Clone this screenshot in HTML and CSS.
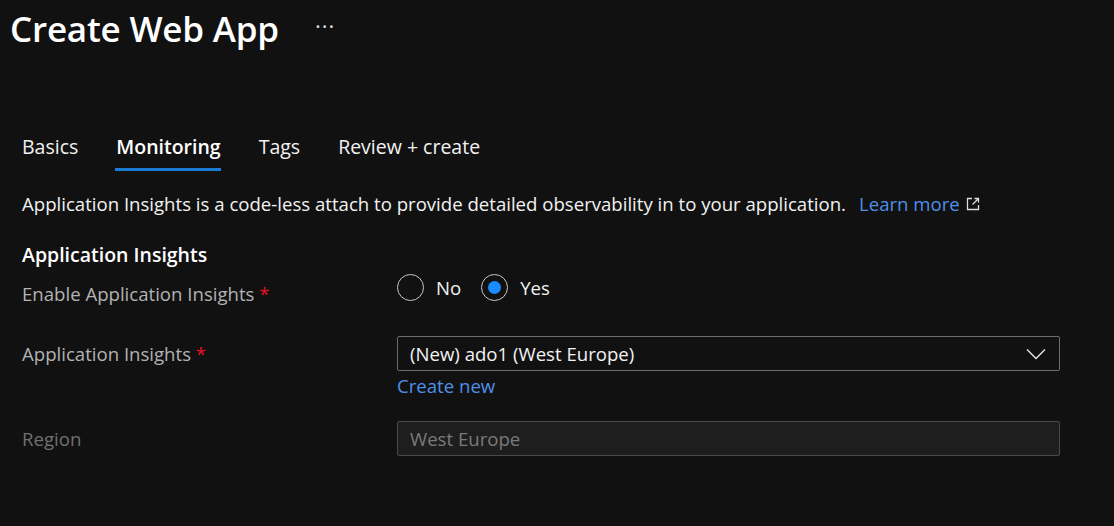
FILE: index.html
```html
<!DOCTYPE html>
<html>
<head>
<meta charset="utf-8">
<link rel="stylesheet" href="styles.css">
</head>
<body>
<div class="page">
  <header class="header">
    <h1 class="title">Create Web App</h1>
    <span class="more">···</span>
  </header>
  <nav class="tabs">
    <span class="tab">Basics</span>
    <span class="tab active">Monitoring</span>
    <span class="tab">Tags</span>
    <span class="tab">Review + create</span>
  </nav>
  <p class="desc">Application Insights is a code-less attach to provide detailed observability in to your application.<a class="link learn">Learn more<svg class="ext" width="16" height="16" viewBox="0 0 16 16"><path d="M7 2.5H2.5v11h11V9" fill="none" stroke="#ddd" stroke-width="1.3"/><path d="M9.5 2.5h4v4M13.5 2.5L7.5 8.5" fill="none" stroke="#ddd" stroke-width="1.3"/></svg></a></p>
  <h2 class="section">Application Insights</h2>
  <div class="row row-radio">
    <div class="label">Enable Application Insights <span class="req">*</span></div>
    <div class="radios">
      <label class="radio"><span class="circle"></span>No</label>
      <label class="radio"><span class="circle checked"></span>Yes</label>
    </div>
  </div>
  <div class="row row-select">
    <div class="label">Application Insights <span class="req">*</span></div>
    <div class="control">
      <div class="select">(New) ado1 (West Europe)<svg class="chev" width="20" height="12" viewBox="0 0 20 12"><path d="M1 1.5l9 9 9-9" fill="none" stroke="#e6e6e6" stroke-width="1.4"/></svg></div>
      <a class="link create">Create new</a>
    </div>
  </div>
  <div class="row row-region">
    <div class="label dim">Region</div>
    <div class="control">
      <div class="input disabled">West Europe</div>
    </div>
  </div>
</div>
</body>
</html>
```
FILE: styles.css
```css
* { box-sizing: border-box; }
html, body { margin: 0; padding: 0; background: #111111; }
body {
  font-family: "Open Sans", "Noto Sans", sans-serif;
  color: #f2f2f2;
  width: 1114px;
  height: 526px;
  overflow: hidden;
}
.page { padding: 0 0 0 22px; }
.header {
  display: flex;
  align-items: center;
  height: 56px;
  margin-left: -12px;
}
.title {
  margin: 0;
  font-size: 35px;
  font-weight: 600;
  letter-spacing: -0.2px;
  color: #ffffff;
}
.more {
  margin-left: 36px;
  font-size: 22px;
  color: #ddd;
  margin-top: -6px;
  letter-spacing: 1px;
}
.tabs {
  display: flex;
  gap: 38px;
  margin-top: 77px;
  height: 40px;
}
.tab {
  font-size: 19.5px;
  color: #f2f2f2;
  line-height: 28px;
  position: relative;
  height: 40px;
}
.tab.active { font-weight: 600; color: #fff; }
.tab.active::after {
  content: "";
  position: absolute;
  left: -1px; right: 0; bottom: 2px;
  height: 3px;
  background: #1a7ad4;
}
.desc {
  margin: 18px 0 0;
  font-size: 18.6px;
  line-height: 26px;
}
.link { color: #4f8fe8; }
.learn { margin-left: 13px; }
.ext { margin-left: 5px; vertical-align: -1px; }
.section {
  margin: 25px 0 0;
  font-size: 19.5px;
  font-weight: 600;
  line-height: 26px;
  color: #fff;
}
.row { display: flex; }
.label {
  width: 375px;
  font-size: 18.6px;
  color: #b3b3b3;
}
.label.dim { color: #707070; }
.req { color: #e81123; }
.row-radio { margin-top: 9px; height: 30px; align-items: center; }
.row-radio .label { padding-top: 2px; }
.radios { display: flex; flex-direction: row; gap: 20px; margin-top: -9px; }
.radio {
  display: flex;
  align-items: center;
  gap: 12px;
  font-size: 18.6px;
  color: #f2f2f2;
}
.circle {
  width: 27px; height: 27px;
  border: 1.5px solid #c8c8c8;
  border-radius: 50%;
  display: flex;
  align-items: center;
  justify-content: center;
}
.circle.checked::after {
  content: "";
  width: 13px; height: 13px;
  border-radius: 50%;
  background: #1a8cff;
}
.row-select { margin-top: 29px; }
.row-select .label { padding-top: 5px; }
.control { display: flex; flex-direction: column; }
.select, .input {
  width: 663px;
  height: 35px;
  border: 1px solid #6b6b6b;
  border-radius: 2px;
  display: flex;
  align-items: center;
  justify-content: space-between;
  padding: 0 12px 0 12px;
  font-size: 18.6px;
  color: #f2f2f2;
}
.chev { margin-right: 1px; }
.create {
  font-size: 18.6px;
  line-height: 26px;
  margin-top: 2px;
}
.row-region { margin-top: 22px; align-items: center; }
.input.disabled {
  background: #1e1e1e;
  border-color: #4a4a4a;
  color: #7a7a7a;
}
```
